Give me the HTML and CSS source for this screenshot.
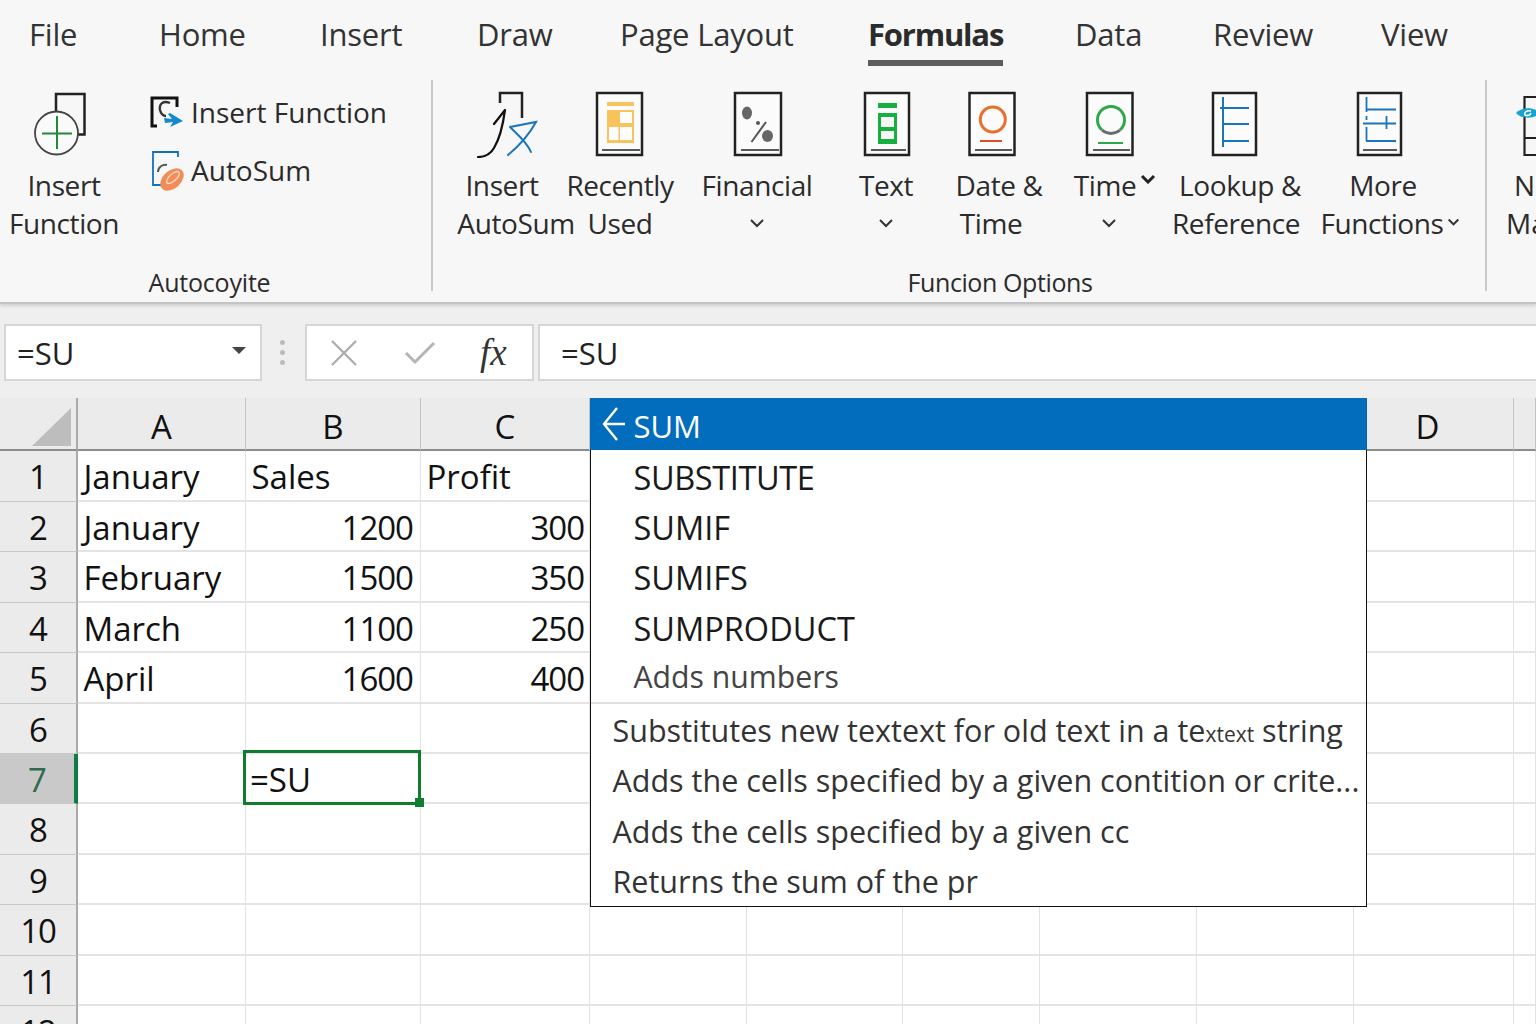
FILE: index.html
```
<!DOCTYPE html>
<html lang="en">
<head>
<meta charset="utf-8">
<title>Formulas</title>
<link rel="stylesheet" href="styles.css">
</head>
<body>
<div class="app">
  <nav class="tabs">
    <span>File</span><span>Home</span><span>Insert</span><span>Draw</span><span>Page Layout</span>
    <span class="active">Formulas</span><span>Data</span><span>Review</span><span>View</span>
  </nav>

  <section class="ribbon">
    <div class="group g1">
      <div class="row">
        <div class="big b-if">
          <svg class="ico" width="100" height="68" viewBox="14 90 100 68">
            <path d="M56 112V94H84.500V134.500H76" class="k25"/>
            <circle cx="56.500" cy="133" r="21.500" fill="#fafafa" stroke="#444" stroke-width="1.800"/>
            <path d="M42 133.500H72M57 116V149" fill="none" stroke="#1e8a3c" stroke-width="2"/>
          </svg>
          <div class="lbl"><div>Insert</div><div>Function</div></div>
        </div>
        <div class="stack">
          <div class="small">
            <svg width="36" height="36" viewBox="149 90 36 36">
              <path d="M157 122H152V94H177V103" fill="none" stroke="#111" stroke-width="3"/>
              <path d="M170 99C163 96 159 100 160 106C161 110 163 112 166 112" fill="none" stroke="#333" stroke-width="2.400"/>
              <path d="M164 114L172 115L168 110L170 109L183 117L170 123L173 118L165 119Z" fill="#1488cc"/>
            </svg>
            <span>Insert Function</span>
          </div>
          <div class="small">
            <svg width="36" height="42" viewBox="149 148 36 42">
              <path d="M178 156V151H153V184H161" fill="none" stroke="#1470b8" stroke-width="1.800"/>
              <path d="M158 171C158 166 163 163 167 164" fill="none" stroke="#555" stroke-width="2"/>
              <ellipse cx="172" cy="178.500" rx="13.500" ry="9" transform="rotate(-42 172 178.500)" fill="#f28d58"/>
              <ellipse cx="173" cy="176.500" rx="8" ry="3.500" transform="rotate(-42 173 176.500)" fill="none" stroke="#fbd9c4" stroke-width="1.400"/>
            </svg>
            <span>AutoSum</span>
          </div>
        </div>
      </div>
      <div class="glabel gl1">Autocoyite</div>
    </div>

    <div class="sep"></div>

    <div class="group g2">
      <div class="row btns">
        <div class="big">
          <svg class="ico" width="100" height="68" viewBox="466 90 100 68">
            <path d="M500 103V93H522V118" class="k25"/>
            <path d="M505 110L494 124M505 110C503 125 500 138 494 148C490 155 485 157 478 157" fill="none" stroke="#111" stroke-width="2.200" stroke-linecap="round"/>
            <path d="M510 127L536 122C530 133 519 146 508 155M510 127C517 134 527 142 531 152" fill="none" stroke="#1b75bb" stroke-width="2" stroke-linecap="round"/>
          </svg>
          <div class="lbl"><div class="pr28">Insert</div><div>AutoSum</div></div>
        </div>
        <div class="big">
          <svg class="ico" width="100" height="68" viewBox="570 90 100 68">
            <rect x="597" y="93" width="45" height="62" class="doc"/>
            <path d="M602 150H640" class="k15"/>
            <path d="M607 102H634V106H607Z" fill="#f8c25c"/>
            <path d="M607 110H634V143H607Z" fill="#f8c25c"/>
            <path d="M620 112H632V123H620ZM609 127H618.500V140H609ZM620 127H632V140H620Z" fill="#fdfdfd"/>
          </svg>
          <div class="lbl"><div>Recently</div><div>Used</div></div>
        </div>
        <div class="big">
          <svg class="ico" width="100" height="68" viewBox="707 90 100 68">
            <rect x="735" y="93" width="46" height="62" class="doc"/>
            <path d="M741 150H779" class="k15"/>
            <ellipse cx="747" cy="113" rx="5" ry="6.500" fill="#666"/>
            <path d="M751.500 142L766 122" fill="none" stroke="#555" stroke-width="2"/>
            <circle cx="758" cy="123" r="2" fill="#555"/>
            <ellipse cx="767.500" cy="136" rx="5.500" ry="6" fill="#666"/>
          </svg>
          <div class="lbl"><div>Financial</div><div class="chevline"><svg class="chev" viewBox="0 0 16 10"><path d="M2 2L8 8L14 2"/></svg></div></div>
        </div>
        <div class="big">
          <svg class="ico" width="100" height="68" viewBox="836 90 100 68">
            <rect x="865" y="93" width="44" height="62" class="doc"/>
            <path d="M871 150H906" class="k15"/>
            <path d="M878 103H897V108H878ZM878 113H897V144H878Z" fill="#16b040"/>
            <path d="M881 117H894V127H881ZM881 131H894V139H881Z" fill="#f6f6f6"/>
          </svg>
          <div class="lbl"><div>Text</div><div class="chevline"><svg class="chev" viewBox="0 0 16 10"><path d="M2 2L8 8L14 2"/></svg></div></div>
        </div>
        <div class="big">
          <svg class="ico" width="100" height="68" viewBox="947 90 100 68">
            <rect x="969.500" y="93" width="45" height="62" class="doc"/>
            <path d="M975 150H1012" class="k15"/>
            <circle cx="992.800" cy="119.500" r="12.500" fill="none" stroke="#e8702a" stroke-width="3"/>
            <path d="M980 141H1002" fill="none" stroke="#d9512a" stroke-width="2"/>
          </svg>
          <div class="lbl"><div class="pl4">Date &amp;</div><div class="pr12">Time</div></div>
        </div>
        <div class="big">
          <svg class="ico" width="100" height="68" viewBox="1065 90 100 68">
            <rect x="1087" y="93" width="45.500" height="62" class="doc"/>
            <path d="M1093 150H1130" class="k15"/>
            <path d="M1102 130A13.500 13.500 0 1 1 1120 130" fill="none" stroke="#2ea84a" stroke-width="3"/>
            <path d="M1120 130A13.500 13.500 0 0 1 1102 130" fill="none" stroke="#6b6b6b" stroke-width="3"/>
            <path d="M1098 143H1123" fill="none" stroke="#2ea84a" stroke-width="2"/>
          </svg>
          <div class="lbl"><div class="timeline">Time<svg class="chev bold" viewBox="0 0 16 10"><path d="M2 2L8 8L14 2"/></svg></div><div class="chevline pr12"><svg class="chev" viewBox="0 0 16 10"><path d="M2 2L8 8L14 2"/></svg></div></div>
        </div>
        <div class="big">
          <svg class="ico" width="100" height="68" viewBox="1188 90 100 68">
            <rect x="1213" y="93" width="43" height="62" class="doc"/>
            <path d="M1223 97V147M1220 108H1249M1223 124H1249M1223 141H1249" fill="none" stroke="#1b75bb" stroke-width="2"/>
          </svg>
          <div class="lbl"><div class="pl4">Lookup &amp;</div><div class="pr4">Reference</div></div>
        </div>
        <div class="big">
          <svg class="ico" width="100" height="68" viewBox="1340 90 100 68">
            <rect x="1358" y="93" width="43" height="62" class="doc"/>
            <path d="M1363 150H1397" class="k15"/>
            <path d="M1366.500 97V112M1366.500 116V120M1366.500 127V141M1366 109.500H1396M1363 123.500H1396M1366 141H1396M1386.500 116V129" fill="none" stroke="#1b75bb" stroke-width="1.800"/>
          </svg>
          <div class="lbl"><div class="pr14">More</div><div class="funcline">Functions<svg class="chev sm" viewBox="0 0 16 10"><path d="M2 2L8 8L14 2"/></svg></div></div>
        </div>
      </div>
      <div class="glabel gl2">Funcion Options</div>
    </div>

    <div class="sep"></div>

    <div class="group g3">
      <svg class="ico3" width="49" height="68" viewBox="1487 90 49 68">
        <path d="M1536 97H1524.500V155H1536M1524.500 138H1536" fill="none" stroke="#222" stroke-width="2.200"/>
        <path d="M1516 113C1520 108 1530 107 1536 110V116C1530 119 1520 118 1516 113Z" fill="#19a3d1"/>
        <path d="M1531 111C1527 110 1524 112 1525 115C1527 116 1530 116 1531 113" fill="none" stroke="#fff" stroke-width="1.500"/>
      </svg>
      <div class="lbl3"><div class="pl8">Name</div><div>Manager</div></div>
    </div>
  </section>

  <section class="fbar">
    <div class="namebox"><span>=SU</span><i class="caret"></i></div>
    <div class="grip"><b></b><b></b><b></b></div>
    <div class="fxbox">
      <svg width="28" height="28" viewBox="0 0 28 28"><path d="M2 2L26 26M26 2L2 26" fill="none" stroke="#aaa" stroke-width="2.200"/></svg>
      <svg class="check" width="32" height="24" viewBox="0 0 32 24"><path d="M2 12L11 21L30 2" fill="none" stroke="#b4b4b4" stroke-width="3"/></svg>
      <span class="fx">fx</span>
    </div>
    <div class="fbox">=SU</div>
  </section>

  <section class="sheet">
    <div class="hd corner"><i></i></div><div class="hd">A</div><div class="hd">B</div><div class="hd">C</div><div class="hd"></div><div class="hd"></div><div class="hd"></div><div class="hd"></div><div class="hd"></div><div class="hd colD">D</div><div class="hd"></div>

    <div class="rh">1</div><div class="c">January</div><div class="c">Sales</div><div class="c">Profit</div><div class="c"></div><div class="c"></div><div class="c"></div><div class="c"></div><div class="c"></div><div class="c"></div><div class="c"></div>
    <div class="rh">2</div><div class="c">January</div><div class="c n nb">1200</div><div class="c n">300</div><div class="c"></div><div class="c"></div><div class="c"></div><div class="c"></div><div class="c"></div><div class="c"></div><div class="c"></div>
    <div class="rh">3</div><div class="c">February</div><div class="c n nb">1500</div><div class="c n">350</div><div class="c"></div><div class="c"></div><div class="c"></div><div class="c"></div><div class="c"></div><div class="c"></div><div class="c"></div>
    <div class="rh">4</div><div class="c">March</div><div class="c n nb">1100</div><div class="c n">250</div><div class="c"></div><div class="c"></div><div class="c"></div><div class="c"></div><div class="c"></div><div class="c"></div><div class="c"></div>
    <div class="rh">5</div><div class="c">April</div><div class="c n nb">1600</div><div class="c n">400</div><div class="c"></div><div class="c"></div><div class="c"></div><div class="c"></div><div class="c"></div><div class="c"></div><div class="c"></div>
    <div class="rh">6</div><div class="c"></div><div class="c"></div><div class="c"></div><div class="c"></div><div class="c"></div><div class="c"></div><div class="c"></div><div class="c"></div><div class="c"></div><div class="c"></div>
    <div class="rh sel">7</div><div class="c"></div><div class="c editing"><div class="cursor">=SU<i class="handle"></i></div></div><div class="c"></div><div class="c"></div><div class="c"></div><div class="c"></div><div class="c"></div><div class="c"></div><div class="c"></div><div class="c"></div>
    <div class="rh">8</div><div class="c"></div><div class="c"></div><div class="c"></div><div class="c"></div><div class="c"></div><div class="c"></div><div class="c"></div><div class="c"></div><div class="c"></div><div class="c"></div>
    <div class="rh">9</div><div class="c"></div><div class="c"></div><div class="c"></div><div class="c"></div><div class="c"></div><div class="c"></div><div class="c"></div><div class="c"></div><div class="c"></div><div class="c"></div>
    <div class="rh">10</div><div class="c"></div><div class="c"></div><div class="c"></div><div class="c"></div><div class="c"></div><div class="c"></div><div class="c"></div><div class="c"></div><div class="c"></div><div class="c"></div>
    <div class="rh">11</div><div class="c"></div><div class="c"></div><div class="c"></div><div class="c"></div><div class="c"></div><div class="c"></div><div class="c"></div><div class="c"></div><div class="c"></div><div class="c"></div>
    <div class="rh">12</div><div class="c"></div><div class="c"></div><div class="c"></div><div class="c"></div><div class="c"></div><div class="c"></div><div class="c"></div><div class="c"></div><div class="c"></div><div class="c"></div>

    <div class="popup">
      <div class="pop-head">
        <svg width="24" height="34" viewBox="0 0 24 34"><path d="M15 1L2 17L15 33M2 17H23" fill="none" stroke="#fff" stroke-width="2.400"/></svg>
        <span>SUM</span>
      </div>
      <ul class="fnlist">
        <li class="tight">SUBSTITUTE</li>
        <li>SUMIF</li>
        <li>SUMIFS</li>
        <li>SUMPRODUCT</li>
        <li class="hint">Adds numbers</li>
      </ul>
      <ul class="desc">
        <li>Substitutes new textext for old text in a te<small>xtext</small> string</li>
        <li>Adds the cells specified by a given contition or crite...</li>
        <li>Adds the cells specified by a given cc</li>
        <li>Returns the sum of the pr</li>
      </ul>
    </div>
  </section>
</div>
</body>
</html>
```
FILE: styles.css
```
* { box-sizing: border-box; }
html, body { margin: 0; padding: 0; }
body { width: 1536px; height: 1024px; overflow: hidden; background: #fff; font-family: "Open Sans", "Noto Sans", sans-serif; font-stretch: 88%; color: #222; }
.app { width: 1536px; height: 1024px; display: flex; flex-direction: column; overflow: hidden; }

/* tabs */
.tabs { height: 80px; flex: none; background: #f7f7f7; padding-left: 29px; display: grid; grid-template-columns: 130px 161px 157px 143px 248px 207px 138px 168px auto; align-items: start; font-size: 31px; line-height: 40px; padding-top: 14px; color: #333; letter-spacing: -0.2px; }
.tabs span { white-space: nowrap; }
.tabs .active { font-weight: 700; width: 135px; height: 52px; border-bottom: 6px solid #5d5d5d; color: #2b2b2b; letter-spacing: -1.200px; }

/* ribbon */
.ribbon { height: 224px; flex: none; display: flex; align-items: flex-start; background: #f7f7f7; border-bottom: 2px solid #c4c4c4; box-shadow: 0 2px 3px #d0d0d0; position: relative; overflow: hidden; }
.group { height: 221px; display: flex; flex-direction: column; flex: none; }
.row { height: 187px; display: flex; flex: none; }
.sep { width: 2px; height: 211px; flex: none; background: #c9c9c9; }
.g1 { width: 431px; }
.g2 { width: 1052px; }
.g3 { width: 49px; }
.b-if { width: 128px; }
.big { display: flex; flex-direction: column; align-items: center; flex: none; padding-top: 10px; white-space: nowrap; }
.ico { flex: none; display: block; margin-bottom: 8px; }
.lbl { font-size: 28px; line-height: 38px; text-align: center; color: #2b2b2b; letter-spacing: -0.4px; }
.stack { margin-left: 21px; padding-top: 3px; display: flex; flex-direction: column; }
.small { height: 58px; display: flex; align-items: center; gap: 6px; font-size: 28px; white-space: nowrap; color: #2b2b2b; }
.glabel { font-size: 25px; line-height: 30px; color: #2b2b2b; text-align: center; white-space: nowrap; }
.gl1 { padding-right: 12px; letter-spacing: -0.2px; }
.gl2 { padding-left: 82px; letter-spacing: -0.4px; }
.btns { padding-left: 31px; }
.btns .big:nth-child(1) { width: 104px; }
.btns .big:nth-child(2) { width: 104px; }
.btns .big:nth-child(3) { width: 170px; }
.btns .big:nth-child(4) { width: 88px; }
.btns .big:nth-child(5) { width: 134px; }
.btns .big:nth-child(6) { width: 102px; }
.btns .big:nth-child(7) { width: 144px; }
.btns .big:nth-child(8) { width: 160px; }
.lbl3 { font-size: 28px; line-height: 38px; padding-left: 19px; white-space: nowrap; margin-top: 8px; color: #2b2b2b; }
.ico3 { display: block; margin-top: 10px; flex: none; }
.k25 { fill: none; stroke: #222; stroke-width: 2.5; }
.k15 { fill: none; stroke: #222; stroke-width: 1.6; }
.doc { fill: #fbfbfb; stroke: #222; stroke-width: 2.5; }
.pr28 { padding-right: 28px; }
.pr14 { padding-right: 14px; }
.pr12 { padding-right: 12px; }
.pr4 { padding-right: 4px; }
.pl4 { padding-left: 4px; }
.pl8 { padding-left: 8px; }
.chevline { height: 38px; display: flex; align-items: center; justify-content: center; }
.chev { width: 16px; height: 10px; fill: none; stroke: #333; stroke-width: 2; flex: none; }
.chev.bold { stroke-width: 3; stroke: #222; margin-left: 4px; vertical-align: 12px; }
.chev.sm { width: 13px; height: 8px; stroke-width: 2.600; margin-left: 3px; vertical-align: 8px; }

/* formula bar */
.fbar { height: 94px; flex: none; background: #efefef; display: flex; align-items: flex-start; padding: 20px 0 0 4px; }
.namebox { width: 258px; height: 57px; flex: none; background: #fff; border: 2px solid #d6d6d6; display: flex; align-items: center; justify-content: space-between; padding: 0 14px 0 11px; font-size: 31px; color: #222; }
.caret { width: 0; height: 0; border-left: 7px solid transparent; border-right: 7px solid transparent; border-top: 7px solid #444; margin-bottom: 4px; }
.grip { width: 41px; height: 57px; margin-right: 2px; flex: none; display: flex; flex-direction: column; align-items: center; justify-content: center; gap: 5px; }
.grip b { width: 5px; height: 5px; border-radius: 50%; background: #bcbcbc; }
.fxbox { width: 229px; height: 57px; flex: none; background: #fff; border: 2px solid #d6d6d6; display: flex; align-items: center; padding-left: 23px; }
.check { margin-left: 46px; }
.fx { font-family: "Liberation Serif", serif; font-style: italic; font-size: 37px; margin-left: 44px; color: #333; font-stretch: normal; line-height: 40px; }
.fbox { flex: 1; height: 57px; background: #fff; border: 2px solid #d6d6d6; margin-left: 4px; display: flex; align-items: center; padding-left: 21px; font-size: 31px; color: #222; margin-right: -4px; }

/* sheet */
.sheet { position: relative; flex: none; display: grid; grid-template-columns: 78px 168px 175px 169px 157px 156px 137px 157px 157px 160px 22px; grid-template-rows: 53px 51px repeat(11, 50.400px); font-size: 33px; color: #111; }
.hd { background: #ebebeb; border-right: 1px solid #c4c4c4; border-bottom: 2px solid #8c8c8c; text-align: center; line-height: 58px; }
.corner { position: relative; border-right-width: 2px; border-right-color: #aaa; }
.corner i { display: block; width: 39px; height: 38px; margin: 10px 0 0 32px; background: #bdbdbd; clip-path: polygon(100% 0, 100% 100%, 0 100%); }
.colD { padding-right: 12px; }
.rh { background: #ebebeb; border-right: 2px solid #aaa; border-bottom: 1px solid #c8c8c8; text-align: center; line-height: 52px; letter-spacing: -1px; }
.rh.sel { background: #c9c9c9; border-right: 4px solid #107c41; color: #2f6a4a; }
.c { border-right: 1px solid #e2e2e2; border-bottom: 2px solid #e4e4e4; padding: 0 5px 0 5.500px; line-height: 52px; white-space: nowrap; overflow: visible; }
.n { text-align: right; letter-spacing: -1px; }
.nb { padding-right: 7px; }
.editing { position: relative; }
.cursor { position: absolute; left: -3px; top: -4px; right: -1px; bottom: -3px; border: 3px solid #107c2f; padding-left: 4px; line-height: 54px; }
.handle { position: absolute; right: -6px; bottom: -5px; width: 9px; height: 9px; background: #107c2f; }

/* popup */
.popup { position: absolute; left: 589.500px; top: 0; width: 777.500px; height: 509px; background: #fff; border: 1px solid #111; border-top: 0; font-size: 32.500px; color: #1a1a1a; }
.pop-head { height: 52px; margin: 0 -1px; background: #026dbd; color: #fff; display: flex; align-items: center; padding-left: 12px; gap: 8px; font-size: 31px; }
.pop-head span { padding-top: 4px; }
.fnlist, .desc { list-style: none; margin: 0; padding: 0; }
.fnlist { padding-left: 43px; height: 254px; border-bottom: 2px solid #e0e0e0; }
.fnlist li { height: 50.200px; line-height: 55px; white-space: nowrap; }
.tight { letter-spacing: -0.4px; }
.fnlist .hint { color: #444; font-size: 30.200px; line-height: 52px; }
.desc { padding-left: 22px; font-size: 30.500px; color: #333; }
.desc li { height: 50.300px; line-height: 53px; white-space: nowrap; }
.desc small { font-size: 21px; }
```
